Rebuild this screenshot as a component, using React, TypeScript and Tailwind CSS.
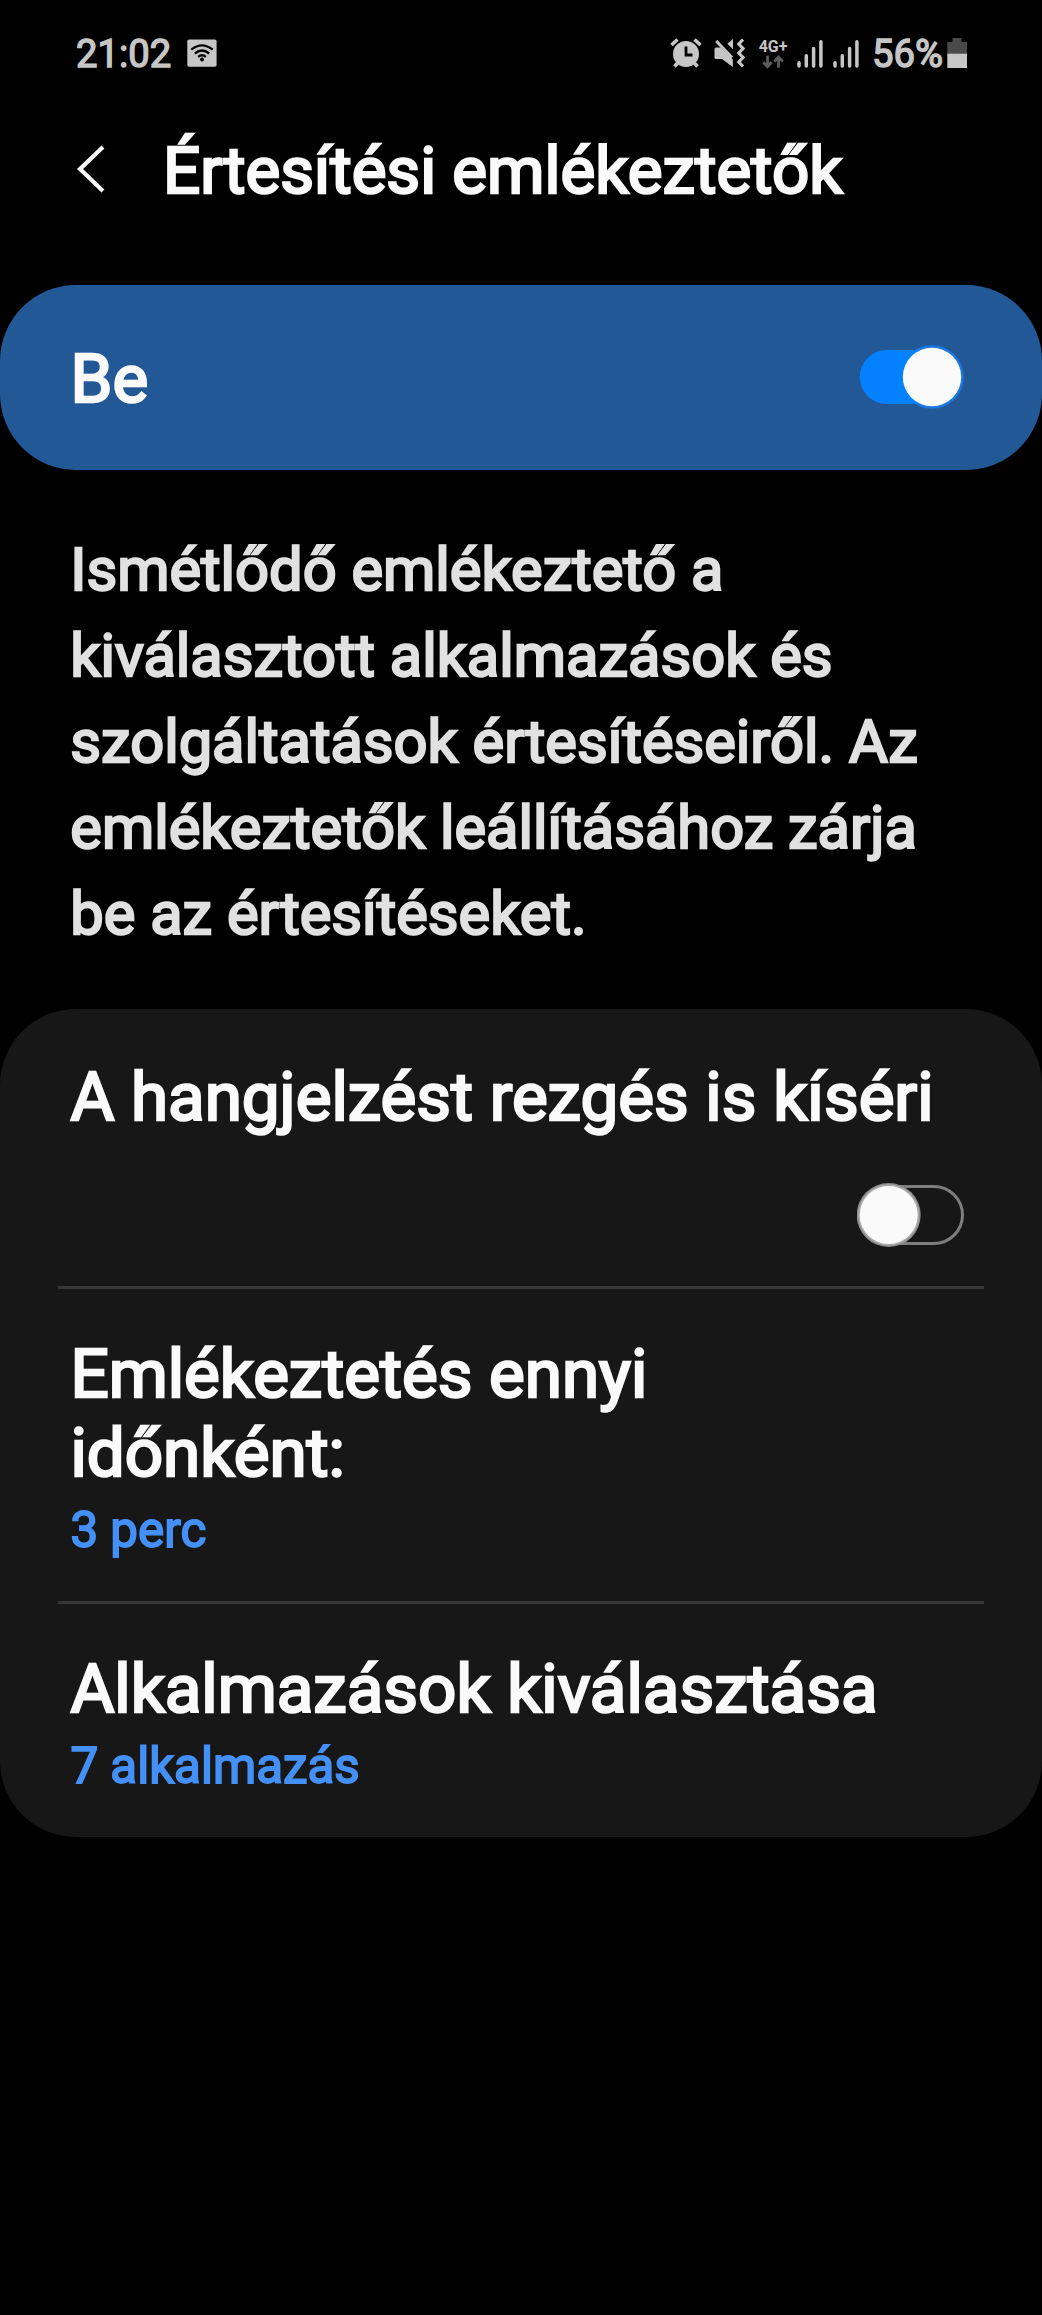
import { useState } from "react";

const description = [
  "Ismétlődő emlékeztető a",
  "kiválasztott alkalmazások és",
  "szolgáltatások értesítéseiről. Az",
  "emlékeztetők leállításához zárja",
  "be az értesítéseket.",
];

const titleText =
  "text-[67.3px] leading-[79px] text-[#fafafa] [-webkit-text-stroke:2.5px_#fafafa]";
const valueText =
  "mt-2 text-[49.3px] leading-[58px] text-[#4490f6] [-webkit-text-stroke:1.8px_#4490f6]";

function AlarmIcon() {
  return (
    <svg width="32" height="36" viewBox="0 0 32 36" fill="none">
      <circle cx="16" cy="18" r="13" fill="#c6c6c6" />
      <path
        d="M1.5 9 7.5 3.5M30.5 9 24.5 3.5M4.5 30.5 8.5 26M27.5 30.5 23.5 26"
        stroke="#c6c6c6"
        strokeWidth="3.6"
      />
      <path d="M16 10.5V19h6.5" stroke="#000" strokeWidth="2.8" />
    </svg>
  );
}

function VibrateIcon() {
  return (
    <svg width="31" height="36" viewBox="0 0 31 36" fill="none">
      <path
        d="M2 11.5h4.5L18.8 23.5V31L8 23H2Q.5 23 .5 21.5V13Q.5 11.5 2 11.5Z"
        fill="#c6c6c6"
      />
      <path d="M2.2 5 18 21.5" stroke="#c6c6c6" strokeWidth="3" />
      <path d="M13.3 7.8 19 3v10.2Z" fill="#c6c6c6" />
      <path
        d="M29 3.5 24.8 8l4.2 4.5-4.2 4.5 4.2 4.5-4.2 4.5 4.2 4.5"
        stroke="#c6c6c6"
        strokeWidth="3.2"
      />
    </svg>
  );
}

function SignalIcon() {
  return (
    <svg width="26" height="36" viewBox="0 0 26 36" fill="none">
      <path
        d="M2 26.8V30M9.3 19.8V30M16.6 12.5V30M23.9 5.8V30"
        stroke="#c6c6c6"
        strokeWidth="3.5"
        strokeLinecap="round"
      />
    </svg>
  );
}

function WifiIcon() {
  return (
    <svg width="30" height="36" viewBox="0 0 30 36" fill="none">
      <rect x="0.3" y="3.4" width="29.3" height="27.4" rx="1.8" fill="#c6c6c6" />
      <g stroke="#000" strokeWidth="2.3">
        <path d="M4.3 13.7Q15 5 25.7 13.7" />
        <path d="M7.8 17.5Q15 11.5 22.2 17.5" />
        <path d="M11.2 20.9Q15 17.5 18.8 20.9" />
      </g>
      <circle cx="15" cy="23.6" r="2" fill="#000" />
    </svg>
  );
}

function StatusBar() {
  return (
    <div className="flex h-[108px] items-center pr-[75px] pl-[76px] text-[38.2px] leading-none text-[#c6c6c6] [-webkit-text-stroke:1.4px_#c6c6c6]">
      <span className="mr-4">21:02</span>
      <WifiIcon />

      <div className="ml-auto flex items-center">
        <AlarmIcon />
        <div className="ml-3">
          <VibrateIcon />
        </div>
        <div className="ml-[13px] flex h-9 w-[30px] flex-col items-center pt-[2px]">
          <span className="text-[16px] leading-[17px] font-bold [-webkit-text-stroke:0px]">
            4G+
          </span>
          <svg width="22" height="14" viewBox="0 0 22 14" fill="none">
            <path
              d="M5.5 .8V11M1.3 7.2l4.2 4.5 4.2-4.5M16.5 12.8V2.5M12.3 6.5l4.2-4.5 4.2 4.5"
              stroke="#5c5c5c"
              strokeWidth="2.8"
            />
          </svg>
        </div>
        <div className="ml-[9px] flex gap-[10px]">
          <SignalIcon />
          <SignalIcon />
        </div>
        <span className="ml-[13px]">56%</span>
        <svg className="ml-1" width="20" height="36" viewBox="0 0 20 36">
          <path d="M5.5 2h9v4H20v12H.3V6h5.2Z" fill="#4a4a4a" />
          <path d="M.3 17.7H20V32H.3Z" fill="#c6c6c6" />
        </svg>
      </div>
    </div>
  );
}

function Toggle({ on, onChange }: { on: boolean; onChange: () => void }) {
  return (
    <button
      role="switch"
      aria-checked={on}
      onClick={onChange}
      className="block shrink-0"
    >
      <svg width="108" height="66" viewBox="0 0 108 66" fill="none">
        {on ? (
          <>
            <circle cx="75" cy="33" r="31.8" fill="#1a78de" />
            <path d="M75 6H29.7a27 27 0 0 0 0 54H75Z" fill="#0381fe" />
            <circle cx="75" cy="33" r="29.2" fill="#fafafa" />
          </>
        ) : (
          <>
            <rect
              x="3.5"
              y="4.5"
              width="102"
              height="57"
              rx="28.5"
              stroke="#7d7d7d"
              strokeWidth="3"
            />
            <circle cx="31.7" cy="33" r="32" fill="#8c8c8c" />
            <circle cx="31.7" cy="33" r="30.5" fill="#acacac" />
            <circle cx="31.7" cy="33" r="29" fill="#fafafa" />
          </>
        )}
      </svg>
    </button>
  );
}

export default function App() {
  const [enabled, setEnabled] = useState(true);
  const [vibrate, setVibrate] = useState(false);

  return (
    <div className="h-[2315px] w-[1042px] overflow-hidden bg-black font-[Roboto,sans-serif] whitespace-nowrap">
      <StatusBar />

      <header className="mb-[50.5px] flex h-[126px] items-center pl-[76px]">
        <svg className="mb-[5px]" width="30" height="50" viewBox="0 0 30 50" fill="none">
          <path d="M27 3 4 25l23 22" stroke="#fafafa" strokeWidth="4.2" />
        </svg>
        <h1 className="ml-[57px] text-[65.5px] leading-none text-[#fafafa] [-webkit-text-stroke:2.5px_#fafafa]">
          Értesítési emlékeztetők
        </h1>
      </header>

      {/* Master switch */}
      <section className="flex h-[185px] items-center justify-between rounded-[76px] bg-[#235897] pr-[77px] pl-[70.5px]">
        <span className={`${titleText} pt-[4px]`}>Be</span>
        <Toggle on={enabled} onChange={() => setEnabled(!enabled)} />
      </section>

      <p className="mt-[57.5px] mb-[52px] pl-[70.3px] text-[59.6px] leading-[86px] text-[#e1e1e1] [-webkit-text-stroke:2.3px_#e1e1e1]">
        {description.map((line) => (
          <span key={line} className="block">
            {line}
          </span>
        ))}
      </p>

      <section className="h-[828px] rounded-[76px] bg-[#171717] px-[58px]">
        <div className="h-[277px] pt-[49px] pl-[12.4px]">
          <h2 className={titleText}>A hangjelzést rezgés is kíséri</h2>
          <div className="mt-[45px] mr-[19px] flex justify-end">
            <Toggle on={vibrate} onChange={() => setVibrate(!vibrate)} />
          </div>
        </div>
        <div className="h-[3px] bg-[#363636]" />
        <div className="h-[312px] pt-[46px] pl-[12.4px]">
          <h2 className={titleText}>
            Emlékeztetés ennyi
            <br />
            időnként:
          </h2>
          <p className={valueText}>3 perc</p>
        </div>
        <div className="h-[3px] bg-[#363636]" />
        <div className="pt-[46px] pl-[12.4px]">
          <h2 className={titleText}>Alkalmazások kiválasztása</h2>
          <p className={valueText}>7 alkalmazás</p>
        </div>
      </section>
    </div>
  );
}
